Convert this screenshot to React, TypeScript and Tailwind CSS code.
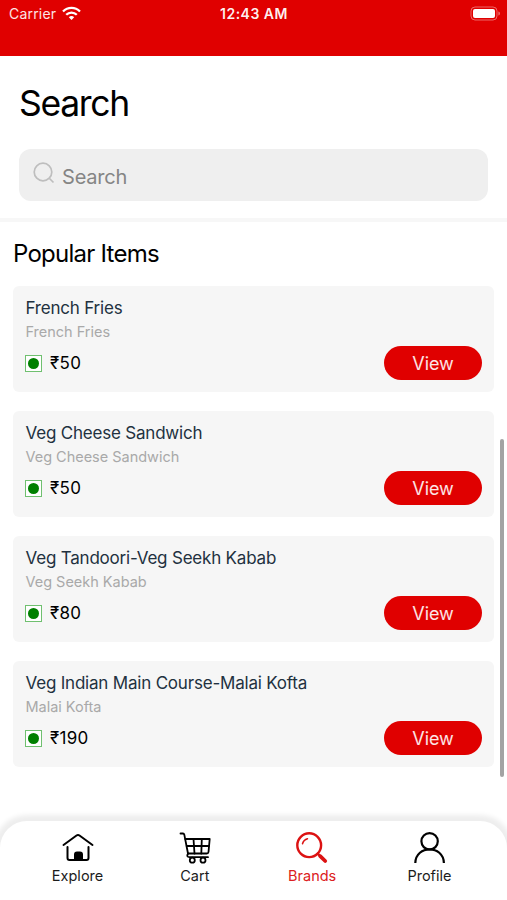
import React from "react";

type Item = { title: string; subtitle: string; price: string };

const items: Item[] = [
  { title: "French Fries", subtitle: "French Fries", price: "₹50" },
  { title: "Veg Cheese Sandwich", subtitle: "Veg Cheese Sandwich", price: "₹50" },
  { title: "Veg Tandoori-Veg Seekh Kabab", subtitle: "Veg Seekh Kabab", price: "₹80" },
  { title: "Veg Indian Main Course-Malai Kofta", subtitle: "Malai Kofta", price: "₹190" },
];

function StatusBar() {
  return (
    <header className="h-[55.5px] shrink-0 bg-[#e00000] text-white">
      <div className="grid h-[27px] grid-cols-3 items-center pl-[9px] pr-[7px] text-[14px] leading-none">
        <div className="flex items-center gap-[5.500px]">
          <span className="tracking-[0.2px] text-white/90">Carrier</span>
          <svg width="19" height="15" viewBox="0 0 19 15" fill="none" stroke="white" strokeWidth="2.3">
            <path d="M1 5.5C5.8 .6 13.2 .6 18 5.5" />
            <path d="M4.2 8.8c3-3 7.600-3 10.600 0" />
            <path d="M6.800 11.200c1.500-1.500 3.900-1.500 5.400 0L9.500 14z" fill="white" stroke="none" />
          </svg>
        </div>
        <div className="-ml-[1px] text-center font-semibold tracking-[0.5px] text-white/95">12:43 AM</div>
        <div className="flex justify-end">
          <svg width="30" height="15" viewBox="0 0 30 15">
            <rect x="1" y="1" width="26" height="13" rx="4" fill="none" stroke="white" strokeOpacity=".4" />
            <rect x="3" y="3" width="22" height="9" rx="2" fill="white" />
            <path d="M28.500 5.500c1.700.6 1.700 3.400 0 4z" fill="white" fillOpacity=".55" />
          </svg>
        </div>
      </div>
    </header>
  );
}

function Card({ item }: { item: Item }) {
  return (
    <li className="flex h-[106px] items-end justify-between rounded-[6px] bg-[#f6f6f6] px-3">
      <div className="flex h-full flex-col pt-[11px]">
        <div className="h-[23px] whitespace-nowrap pl-[0.5px] text-[17px] leading-[23px] tracking-[-0.2px] text-[#22313f]">{item.title}</div>
        <div className="h-[23px] whitespace-nowrap pl-[0.5px] text-[14.500px] leading-[23px] tracking-[-0.02px] text-[#a9a9a9]">{item.subtitle}</div>
        <div className="mt-[9px] flex h-[23px] items-center gap-2">
          <span className="flex size-[17px] items-center justify-center border border-[#70c070] bg-white">
            <span className="size-[11px] rounded-full bg-[#008000]" />
          </span>
          <span className="text-[17px] tracking-[0.3px] text-black">{item.price}</span>
        </div>
      </div>
      <button className="mb-3 h-[34px] w-[98px] rounded-full bg-[#e00000] text-[18px] tracking-[-0.1px] text-white/90">View</button>
    </li>
  );
}

function HomeIcon() {
  return (
    <svg width="32" height="32" viewBox="0 0 32 32" fill="none" stroke="black" strokeWidth="2" strokeLinecap="round" strokeLinejoin="round">
      <path d="M1.500 13 14.500 3.500q1.500-1 3 0L30.500 13" />
      <path d="M5.500 15v11q0 2 2 2h17q2 0 2-2V15" />
      <path d="M13 27.500v-5q0-2 2-2h3q2 0 2 2v5z" fill="black" />
    </svg>
  );
}

function CartIcon() {
  return (
    <svg width="32" height="32" viewBox="0 0 32 32" fill="none" stroke="black" strokeWidth="1.800" strokeLinecap="round" strokeLinejoin="round">
      <path d="M1.500 1.500H4q1 0 1.300 1.200L9 21.500" />
      <path d="M6.300 7H30.700l-1.200 13q-.2 1.500-1.700 1.500H9" />
      <path d="M7.700 14h22M14.500 7l1 14.500M22.800 7l-.5 14.500" />
      <path d="M9 21.500q-2 3.700 1.500 3.700H29" />
      <circle cx="13.300" cy="28.200" r="2.500" />
      <circle cx="24" cy="28.200" r="2.500" />
    </svg>
  );
}

function SearchIcon() {
  return (
    <svg width="32" height="32" viewBox="0 0 32 32" fill="none" stroke="#dc1212" strokeLinecap="round">
      <circle cx="13.200" cy="13.200" r="11.900" strokeWidth="2.400" />
      <path d="M6.500 11.700C7.200 9.200 9 7.400 11.500 6.700" strokeWidth="1.500" />
      <path d="m21.700 21.700 2 2" strokeWidth="2.500" />
      <path d="m24.200 24.200 5 4.800" strokeWidth="3.800" />
    </svg>
  );
}

function ProfileIcon() {
  return (
    <svg width="32" height="32" viewBox="0 0 32 32" fill="none" stroke="black" strokeWidth="2.200">
      <circle cx="16.600" cy="9.300" r="8.200" />
      <path d="M2.300 31C2.800 12.800 30.400 12.800 30.900 31" />
    </svg>
  );
}

const tabs = [
  { label: "Explore", icon: <HomeIcon />, tone: "text-[#1c1c1c]" },
  { label: "Cart", icon: <CartIcon />, tone: "text-[#1c1c1c]" },
  { label: "Brands", icon: <SearchIcon />, tone: "text-[#dc2020]" },
  { label: "Profile", icon: <ProfileIcon />, tone: "text-[#1c1c1c]" },
];

export default function App() {
  return (
    <div className="relative flex h-[900px] w-[507px] flex-col overflow-hidden bg-white font-['Inter','Noto_Sans',sans-serif]">
      <StatusBar />
      <section className="h-[162.500px] shrink-0 px-[19px] pt-[25px]">
        <h1 className="h-[46px] text-[35.5px] leading-[46px] tracking-[-1.300px] text-black">Search</h1>
        <div className="mt-[22px] flex h-[52.500px] items-center rounded-[12px] bg-[#efefef] pl-[13.500px]">
          <svg className="-mt-[2px]" width="23" height="23" viewBox="0 0 23 23" fill="none" stroke="#bebebe" strokeWidth="1.700">
            <circle cx="10" cy="10" r="8.800" />
            <path d="m16.500 16.500 4 4" />
          </svg>
          <span className="ml-[6.500px] mt-[5px] text-[20px] tracking-[-0.2px] text-[#858585]">Search</span>
        </div>
      </section>
      <div className="h-[4px] shrink-0 bg-[#f7f7f7]" />
      <main className="flex-1 px-[13px] pt-[16px]">
        <h2 className="h-[32px] text-[24px] leading-[32px] tracking-[-0.750px] text-black">Popular Items</h2>
        <ul className="mt-[16px] flex flex-col gap-[19px]">
          {items.map((item) => (
            <Card key={item.title} item={item} />
          ))}
        </ul>
      </main>
      <div className="absolute left-[499.500px] top-[439px] h-[338px] w-[4px] rounded-full bg-[#a3a3a3]" />
      <nav className="flex h-[79px] shrink-0 justify-center rounded-t-[27px] bg-white pt-[11px] shadow-[0_0_5px_6px_rgba(0,0,0,0.07)]">
        {tabs.map((tab) => (
          <a key={tab.label} className={`flex w-[117.300px] flex-col items-center text-[14.500px] leading-[20px] ${tab.tone}`}>
            {tab.icon}
            <span className="mt-[2px]">{tab.label}</span>
          </a>
        ))}
      </nav>
    </div>
  );
}
